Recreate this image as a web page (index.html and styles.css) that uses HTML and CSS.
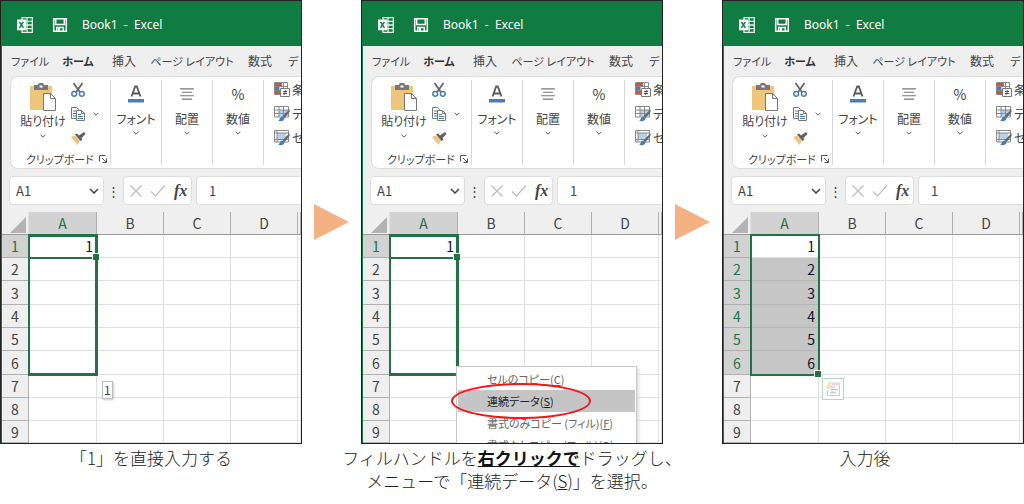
FILE: index.html
```html
<!DOCTYPE html>
<html lang="ja">
<head>
<meta charset="utf-8">
<title>連続データの入力</title>
<link rel="stylesheet" href="styles.css">
</head>
<body>
<svg class="defs" aria-hidden="true">
  <symbol id="excel" viewBox="0 0 16 16"><path d="M5 .7h10.3v14.6H5zM5 4.3h10M5 8h10M5 11.7h10M10 1v14" fill="none" stroke="#e4f3ea" stroke-width="1.3"/><path d="M0 2.5h9v10.8H0z" fill="#fff"/><path d="M2.4 4.8l4 6M6.4 4.8l-4 6" stroke="#107c41" stroke-width="1.5"/></symbol>
  <symbol id="save" viewBox="0 0 16 16"><path d="M1.700 1.700h12.600v12.600H1.700zM3.700 2v5.500h8.600V2M4.700 14v-3.500h6.600V14" fill="none" stroke="#fff" stroke-width="1.500"/><path d="M6 11h2v3H6z" fill="#fff"/></symbol>
  <symbol id="paste" viewBox="0 0 28 28"><path d="M1 3h22v24H1z" fill="#edc67c"/><path d="M5 2h4c0-3 6-3 6 0h4v5H5z" fill="#787878"/><path d="M10.5 2.5h3v2h-3z" fill="#fff"/><path d="M14.5 10.5h7l5 5v12h-12z" fill="#fff" stroke="#777"/><path d="M21.5 10.5v5h5" fill="none" stroke="#777"/></symbol>
  <symbol id="cut" viewBox="0 0 16 16"><path d="M3.5 1l6.3 9M12.5 1L6.2 10" stroke="#666" stroke-width="1.8"/><circle cx="4.2" cy="11.8" r="2.4" fill="none" stroke="#4780b8" stroke-width="1.5"/><circle cx="11.8" cy="11.8" r="2.4" fill="none" stroke="#4780b8" stroke-width="1.5"/></symbol>
  <symbol id="copy" viewBox="0 0 16 16"><path d="M1.5 1.5h5l2 2v9h-7z" fill="#fff" stroke="#777"/><path d="M3 5h4M3 7.500h4M3 10h4" stroke="#4780b8"/><path d="M6.500 4.500h5l3 3v7h-8z" fill="#fff" stroke="#777"/><path d="M11.500 4.500v3h3" fill="none" stroke="#777"/><path d="M8 8.500h3M8 10.500h5M8 12.500h5" stroke="#4780b8"/></symbol>
  <symbol id="brush" viewBox="0 0 16 16"><path d="M1 7l4-1.500 5 5L7.500 15z" fill="#edc67c"/><path d="M5 4.500l2-1 2 2L14 2l1.500 2-4 4 1 1.500L10.500 11z" fill="#606060"/></symbol>
  <symbol id="font" viewBox="0 0 16 18"><path d="M3.500 11.500L7.200 1.500h1.600l3.700 10M5 8.500h6" fill="none" stroke="#595959" stroke-width="1.8"/><path d="M0 14h16v3.500H0z" fill="#4a7db5"/></symbol>
  <symbol id="align" viewBox="0 0 14 12"><path d="M1 1.500h12M2.500 4.500h9M1 7.500h12M2.500 10.500h9" stroke="#777"/></symbol>
  <symbol id="cond" viewBox="0 0 16 16"><path d="M.5.500h13v12H.5zM.5 4.500h13M.5 8.500h13M5 .5v12M9.500.5v12" fill="#fff" stroke="#888"/><path d="M1 1h7v3H1zM1 9h5v3H1z" fill="#d35436"/><path d="M1 5h4v3H1z" fill="#4a7db5"/><path d="M6.500 6.500h9v8h-9z" fill="#fff" stroke="#777"/><path d="M9 9.500h4M9 11.500h4M12 8l-2 5" stroke="#555"/></symbol>
  <symbol id="tbl" viewBox="0 0 16 16"><path d="M.5.500h14v10.500H.5z" fill="#fff" stroke="#888"/><path d="M5 4h9v7H5z" fill="#b9d1e8"/><path d="M.5 4h14M.5 7.500h14M5 .5v10.500M9.500.5v10.500" stroke="#888"/><path d="M15.500 3v3l-5 6-2-1.500z" fill="#666"/><path d="M4 14.500c2 0 1.500-4 4.500-4l2 1.500c0 3-3.500 4-6.500 2.500z" fill="#3f7fbf"/></symbol>
  <symbol id="cell" viewBox="0 0 16 16"><path d="M.5.500h14v11.500H.5z" fill="#fff" stroke="#888"/><path d="M3 3h9v6.500H3z" fill="#b9d1e8"/><path d="M.5 3h14M.5 9.500h14M3 .5v11.500" fill="none" stroke="#888"/><path d="M15.500 3v3l-5 6-2-1.500z" fill="#666"/><path d="M4 14.500c2 0 1.500-4 4.500-4l2 1.500c0 3-3.500 4-6.500 2.500z" fill="#3f7fbf"/></symbol>
  <symbol id="chev" viewBox="0 0 10 6"><path d="M1 1l4 4 4-4" fill="none" stroke="currentColor" stroke-width="1.500"/></symbol>
  <symbol id="launch" viewBox="0 0 8 8"><path d="M.5 6.500v-6h6M3 3l4 4M7.500 3.500v4h-4" fill="none" stroke="#555"/></symbol>
  <symbol id="x" viewBox="0 0 14 14"><path d="M1.500 1.500l11 11M12.500 1.500l-11 11" stroke="#bbb" stroke-width="1.200"/></symbol>
  <symbol id="check" viewBox="0 0 16 14"><path d="M1 7.500l4.500 4.500L15 1.500" fill="none" stroke="#bbb" stroke-width="1.200"/></symbol>
  <symbol id="corner" viewBox="0 0 16 16"><path d="M16 0v16H0z" fill="#b3b3b3"/></symbol>
  <symbol id="flash" viewBox="0 0 16 16"><path d="M4 1h3L5 5h2L1 11l2-4H1z" fill="#f8ddb8"/><path d="M7 1.500h8v3H7z" fill="#ddd"/><path d="M14.500 4v10.500h-12V10" fill="none" stroke="#ccc"/><path d="M6 6h4" stroke="#eba9a0"/><path d="M6 8.500h7" stroke="#9fc4e6" stroke-width="1.300"/><path d="M5 11.500h6" stroke="#b9dcc8" stroke-width="2"/></symbol>
  <symbol id="arrow" viewBox="0 0 35 36"><path d="M0 0l35 18L0 36z" fill="#f4b183"/></symbol>
</svg>

<main class="steps">
  <figure class="step">
    <div class="window">
      <header class="titlebar"><svg class="i16"><use href="#excel"/></svg><button class="save" aria-label="保存"><svg class="i16"><use href="#save"/></svg></button><span class="name">Book1  -  Excel</span></header>
      <nav class="tabs"><button class="w-file">ファイル</button><button class="w-home on">ホーム</button><button class="w-short">挿入</button><button class="w-page">ページ レイアウト</button><button class="w-short">数式</button><button class="w-cut">デ</button></nav>
      <div class="ribbon">
        <section class="group clip">
          <div class="cliptop">
            <button class="big"><svg class="i28"><use href="#paste"/></svg><span>貼り付け</span><svg class="chev"><use href="#chev"/></svg></button>
            <div class="small"><button aria-label="切り取り"><svg class="i16"><use href="#cut"/></svg></button><button aria-label="コピー"><svg class="i16"><use href="#copy"/></svg><svg class="chev"><use href="#chev"/></svg></button><button aria-label="書式のコピー"><svg class="i16"><use href="#brush"/></svg></button></div>
          </div>
          <div class="clipfoot"><span>クリップボード</span><button aria-label="詳細"><svg class="i8"><use href="#launch"/></svg></button></div>
        </section>
        <button class="group one"><svg class="ico"><use href="#font"/></svg><span>フォント</span><svg class="chev"><use href="#chev"/></svg></button>
        <button class="group one"><svg class="ico thin"><use href="#align"/></svg><span>配置</span><svg class="chev"><use href="#chev"/></svg></button>
        <button class="group one"><span class="ico pct">%</span><span>数値</span><svg class="chev"><use href="#chev"/></svg></button>
        <section class="styles"><button><svg class="i16"><use href="#cond"/></svg>条</button><button><svg class="i16"><use href="#tbl"/></svg>デ</button><button><svg class="i16"><use href="#cell"/></svg>セ</button></section>
      </div>
      <div class="formulabar"><div class="box namebox"><input aria-label="名前ボックス" value="A1"><button aria-label="一覧"><svg class="chev wide"><use href="#chev"/></svg></button></div><span class="dots">⋮</span><div class="box tools"><button aria-label="キャンセル"><svg class="i14"><use href="#x"/></svg></button><button aria-label="入力"><svg class="i16"><use href="#check"/></svg></button><button class="fx">fx</button></div><input class="box formula" aria-label="数式バー" value="1"></div>
      <div class="sheet">
        <table>
          <colgroup><col class="c-row"><col class="c-a"><col class="c"><col class="c"><col class="c"><col></colgroup>
          <thead><tr><td class="corner"><svg class="i16"><use href="#corner"/></svg></td><th class="sel">A</th><th>B</th><th>C</th><th>D</th><th></th></tr></thead>
          <tbody>
            <tr><th class="sel">1</th><td>1</td><td></td><td></td><td></td><td></td></tr>
            <tr><th>2</th><td></td><td></td><td></td><td></td><td></td></tr>
            <tr><th>3</th><td></td><td></td><td></td><td></td><td></td></tr>
            <tr><th>4</th><td></td><td></td><td></td><td></td><td></td></tr>
            <tr><th>5</th><td></td><td></td><td></td><td></td><td></td></tr>
            <tr><th>6</th><td></td><td></td><td></td><td></td><td></td></tr>
            <tr><th>7</th><td></td><td></td><td></td><td></td><td></td></tr>
            <tr><th>8</th><td></td><td></td><td></td><td></td><td></td></tr>
            <tr><th>9</th><td></td><td></td><td></td><td></td><td></td></tr>
          </tbody>
        </table>
        <div class="range drag"></div><div class="active"></div><div class="tip">1</div>
      </div>
    </div>
    <figcaption>「1」を直接入力する</figcaption>
  </figure>

  <svg class="arrow" aria-hidden="true"><use href="#arrow"/></svg>

  <figure class="step">
    <div class="window">
      <header class="titlebar"><svg class="i16"><use href="#excel"/></svg><button class="save" aria-label="保存"><svg class="i16"><use href="#save"/></svg></button><span class="name">Book1  -  Excel</span></header>
      <nav class="tabs"><button class="w-file">ファイル</button><button class="w-home on">ホーム</button><button class="w-short">挿入</button><button class="w-page">ページ レイアウト</button><button class="w-short">数式</button><button class="w-cut">デ</button></nav>
      <div class="ribbon">
        <section class="group clip">
          <div class="cliptop">
            <button class="big"><svg class="i28"><use href="#paste"/></svg><span>貼り付け</span><svg class="chev"><use href="#chev"/></svg></button>
            <div class="small"><button aria-label="切り取り"><svg class="i16"><use href="#cut"/></svg></button><button aria-label="コピー"><svg class="i16"><use href="#copy"/></svg><svg class="chev"><use href="#chev"/></svg></button><button aria-label="書式のコピー"><svg class="i16"><use href="#brush"/></svg></button></div>
          </div>
          <div class="clipfoot"><span>クリップボード</span><button aria-label="詳細"><svg class="i8"><use href="#launch"/></svg></button></div>
        </section>
        <button class="group one"><svg class="ico"><use href="#font"/></svg><span>フォント</span><svg class="chev"><use href="#chev"/></svg></button>
        <button class="group one"><svg class="ico thin"><use href="#align"/></svg><span>配置</span><svg class="chev"><use href="#chev"/></svg></button>
        <button class="group one"><span class="ico pct">%</span><span>数値</span><svg class="chev"><use href="#chev"/></svg></button>
        <section class="styles"><button><svg class="i16"><use href="#cond"/></svg>条</button><button><svg class="i16"><use href="#tbl"/></svg>デ</button><button><svg class="i16"><use href="#cell"/></svg>セ</button></section>
      </div>
      <div class="formulabar"><div class="box namebox"><input aria-label="名前ボックス" value="A1"><button aria-label="一覧"><svg class="chev wide"><use href="#chev"/></svg></button></div><span class="dots">⋮</span><div class="box tools"><button aria-label="キャンセル"><svg class="i14"><use href="#x"/></svg></button><button aria-label="入力"><svg class="i16"><use href="#check"/></svg></button><button class="fx">fx</button></div><input class="box formula" aria-label="数式バー" value="1"></div>
      <div class="sheet">
        <table>
          <colgroup><col class="c-row"><col class="c-a"><col class="c"><col class="c"><col class="c"><col></colgroup>
          <thead><tr><td class="corner"><svg class="i16"><use href="#corner"/></svg></td><th class="sel">A</th><th>B</th><th>C</th><th>D</th><th></th></tr></thead>
          <tbody>
            <tr><th class="sel">1</th><td>1</td><td></td><td></td><td></td><td></td></tr>
            <tr><th>2</th><td></td><td></td><td></td><td></td><td></td></tr>
            <tr><th>3</th><td></td><td></td><td></td><td></td><td></td></tr>
            <tr><th>4</th><td></td><td></td><td></td><td></td><td></td></tr>
            <tr><th>5</th><td></td><td></td><td></td><td></td><td></td></tr>
            <tr><th>6</th><td></td><td></td><td></td><td></td><td></td></tr>
            <tr><th>7</th><td></td><td></td><td></td><td></td><td></td></tr>
            <tr><th>8</th><td></td><td></td><td></td><td></td><td></td></tr>
            <tr><th>9</th><td></td><td></td><td></td><td></td><td></td></tr>
          </tbody>
        </table>
        <div class="range drag"></div><div class="active"></div>
        <div class="menu"><button>セルのコピー(<u>C</u>)</button><button class="hover">連続データ(<u>S</u>)</button><button>書式のみコピー (フィル)(<u>F</u>)</button><button>書式なしコピー (フィル)(<u>O</u>)</button></div>
        <div class="ring"></div>
      </div>
    </div>
    <figcaption>フィルハンドルを<b>右クリックで</b>ドラッグし、<br>メニューで「連続データ(<u>S</u>)」を選択。</figcaption>
  </figure>

  <svg class="arrow" aria-hidden="true"><use href="#arrow"/></svg>

  <figure class="step">
    <div class="window">
      <header class="titlebar"><svg class="i16"><use href="#excel"/></svg><button class="save" aria-label="保存"><svg class="i16"><use href="#save"/></svg></button><span class="name">Book1  -  Excel</span></header>
      <nav class="tabs"><button class="w-file">ファイル</button><button class="w-home on">ホーム</button><button class="w-short">挿入</button><button class="w-page">ページ レイアウト</button><button class="w-short">数式</button><button class="w-cut">デ</button></nav>
      <div class="ribbon">
        <section class="group clip">
          <div class="cliptop">
            <button class="big"><svg class="i28"><use href="#paste"/></svg><span>貼り付け</span><svg class="chev"><use href="#chev"/></svg></button>
            <div class="small"><button aria-label="切り取り"><svg class="i16"><use href="#cut"/></svg></button><button aria-label="コピー"><svg class="i16"><use href="#copy"/></svg><svg class="chev"><use href="#chev"/></svg></button><button aria-label="書式のコピー"><svg class="i16"><use href="#brush"/></svg></button></div>
          </div>
          <div class="clipfoot"><span>クリップボード</span><button aria-label="詳細"><svg class="i8"><use href="#launch"/></svg></button></div>
        </section>
        <button class="group one"><svg class="ico"><use href="#font"/></svg><span>フォント</span><svg class="chev"><use href="#chev"/></svg></button>
        <button class="group one"><svg class="ico thin"><use href="#align"/></svg><span>配置</span><svg class="chev"><use href="#chev"/></svg></button>
        <button class="group one"><span class="ico pct">%</span><span>数値</span><svg class="chev"><use href="#chev"/></svg></button>
        <section class="styles"><button><svg class="i16"><use href="#cond"/></svg>条</button><button><svg class="i16"><use href="#tbl"/></svg>デ</button><button><svg class="i16"><use href="#cell"/></svg>セ</button></section>
      </div>
      <div class="formulabar"><div class="box namebox"><input aria-label="名前ボックス" value="A1"><button aria-label="一覧"><svg class="chev wide"><use href="#chev"/></svg></button></div><span class="dots">⋮</span><div class="box tools"><button aria-label="キャンセル"><svg class="i14"><use href="#x"/></svg></button><button aria-label="入力"><svg class="i16"><use href="#check"/></svg></button><button class="fx">fx</button></div><input class="box formula" aria-label="数式バー" value="1"></div>
      <div class="sheet">
        <table>
          <colgroup><col class="c-row"><col class="c-a"><col class="c"><col class="c"><col class="c"><col></colgroup>
          <thead><tr><td class="corner"><svg class="i16"><use href="#corner"/></svg></td><th class="sel">A</th><th>B</th><th>C</th><th>D</th><th></th></tr></thead>
          <tbody>
            <tr><th class="sel">1</th><td>1</td><td></td><td></td><td></td><td></td></tr>
            <tr><th class="sel">2</th><td class="fill">2</td><td></td><td></td><td></td><td></td></tr>
            <tr><th class="sel">3</th><td class="fill">3</td><td></td><td></td><td></td><td></td></tr>
            <tr><th class="sel">4</th><td class="fill">4</td><td></td><td></td><td></td><td></td></tr>
            <tr><th class="sel">5</th><td class="fill">5</td><td></td><td></td><td></td><td></td></tr>
            <tr><th class="sel">6</th><td class="fill">6</td><td></td><td></td><td></td><td></td></tr>
            <tr><th>7</th><td></td><td></td><td></td><td></td><td></td></tr>
            <tr><th>8</th><td></td><td></td><td></td><td></td><td></td></tr>
            <tr><th>9</th><td></td><td></td><td></td><td></td><td></td></tr>
          </tbody>
        </table>
        <div class="range done"></div>
        <button class="autofill" aria-label="オートフィル オプション"><svg class="i16"><use href="#flash"/></svg></button>
      </div>
    </div>
    <figcaption class="after">入力後</figcaption>
  </figure>
</main>
</body>
</html>
```
FILE: styles.css
```css
* { box-sizing: border-box; }
body {
  margin: 0;
  background: #fff;
  color: #444;
  font: 12px/16px "Noto Sans CJK JP", sans-serif;
  font-feature-settings: "palt";
}
button, input {
  margin: 0;
  padding: 0;
  border: 0;
  background: none;
  color: inherit;
  font: inherit;
  font-feature-settings: inherit;
  white-space: nowrap;
}
svg { display: block; flex: none; }
.defs { position: absolute; width: 0; height: 0; }
.i8 { width: 8px; height: 8px; }
.i14 { width: 14px; height: 14px; }
.i16 { width: 16px; height: 16px; }
.i28 { width: 28px; height: 28px; }
.chev { width: 6px; height: 4px; }
.chev.wide { width: 10px; height: 6px; }

.steps {
  display: grid;
  grid-template-columns: minmax(0, 1fr) 59px minmax(0, 1fr) 59px minmax(0, 1fr);
}
.step { margin: 0; }
.arrow { width: 35px; height: 36px; margin: 204px auto 0 12px; }
.window {
  overflow: hidden;
  padding-left: 1px;
  border: 1px solid #222;
  background: #efefef;
  box-shadow: inset 1px 0 #107c41;
}

.titlebar {
  display: flex;
  align-items: center;
  height: 45px;
  padding: 2px 0 0 15px;
  background: #107c41;
  color: #fff;
}
.save { margin: 0 14px 0 19px; }
.name { font-family: "Noto Sans", sans-serif; white-space: pre; }

.tabs {
  display: flex;
  height: 30px;
  padding-left: 5px;
  font-size: 11px;
}
.tabs button { flex: none; }
.w-file { width: 46px; }
.w-home { width: 50px; }
.w-short { width: 42px; font-size: 12px; }
.w-page { width: 94px; }
.w-cut { padding-left: 7px; }
.tabs .on { color: #333; font-weight: 700; }

.ribbon {
  display: flex;
  height: 93px;
  margin-left: 8px;
  padding: 3px 0;
  border: 1px solid #ddd;
  border-right: 0;
  border-radius: 8px 0 0 8px;
  background: #fff;
}
.group { flex: none; border-right: 1px solid #d8d8d8; }
.clip { display: flex; flex-direction: column; justify-content: space-between; width: 100px; }
.cliptop { display: flex; }
.big { display: flex; flex-direction: column; align-items: center; width: 64px; padding-top: 3px; }
.big span { line-height: 20px; }
.big .chev { margin-top: 3px; }
.small { display: flex; flex-direction: column; gap: 8px; padding-top: 2px; margin-left: -5px; }
.small button { display: flex; align-items: center; gap: 7px; }
.clipfoot {
  display: flex;
  align-items: center;
  justify-content: space-between;
  padding: 0 3px 0 15px;
  font-size: 11px;
  line-height: 12px;
}
.one { display: flex; flex-direction: column; align-items: center; width: 51px; padding-top: 5px; }
.one .ico { width: 16px; height: 18px; margin-bottom: 8px; }
.one .thin { padding: 2px 0; }
.pct { font-size: 14px; line-height: 18px; }
.one .chev { margin-top: 4px; }
.styles { display: flex; flex-direction: column; gap: 8px; padding: 2px 0 0 10px; }
.styles button { display: flex; gap: 2px; height: 16px; }

.formulabar {
  display: flex;
  align-items: center;
  height: 43px;
  padding-left: 7px;
  font-size: 13px;
}
.box { height: 29px; border: 1px solid #ddd; border-radius: 4px; background: #fff; }
.namebox { display: flex; align-items: center; width: 95px; padding: 0 4px 0 6px; }
.namebox input { flex: 1; min-width: 0; }
.dots { width: 19px; text-align: center; }
.tools { display: flex; align-items: center; gap: 7px; width: 69px; padding: 0 4px 0 5px; }
.fx { margin-left: 1px; font: italic 700 16px/20px "Liberation Serif", serif; }
.formula { flex: 1; min-width: 0; margin-left: 4px; padding-left: 12px; border-right: 0; border-radius: 4px 0 0 4px; }

.sheet { position: relative; overflow: hidden; background: #fff; font-size: 14px; }
table { width: 100%; table-layout: fixed; border-collapse: separate; border-spacing: 0; line-height: 16px; }
.c-row { width: 27px; }
.c-a { width: 68px; }
.c { width: 67px; }
tr { height: 23px; }
tbody tr:nth-child(3n) { height: 24px; }
tbody tr:last-child { height: 22px; }
th, td { padding: 0; border: solid #e0e0e0; border-width: 0 1px 1px 0; }
th { border-color: #b0b0b0; background: #efefef; font-weight: 400; }
tbody td { padding-right: 3px; color: #112; text-align: right; }
thead td, thead th { border-bottom-color: #999; }
.corner { background: #efefef; }
.corner svg { margin: 4px 0 0 8px; }
.sel { background: #d2d2d2; color: #217346; }
.fill { background: #c6c6c6; border-bottom-color: #b5b5b5; }

.range { position: absolute; top: 22px; left: 26px; width: 70px; height: 142px; border: 2px solid #217346; }
.drag { border-width: 3px 3px 3px 2px; }
.active { position: absolute; top: 22px; left: 26px; width: 70px; height: 25px; border: 2px solid #217346; }
.active::after, .done::after {
  content: "";
  position: absolute;
  right: -3px;
  bottom: -3px;
  width: 6px;
  height: 6px;
  border: solid #fff;
  border-width: 1px 0 0 1px;
  background: #217346;
}
.tip {
  position: absolute;
  top: 169px;
  left: 100px;
  padding: 0 1px;
  border: 1px solid #bbb;
  background: #fff;
  box-shadow: 1px 1px 2px #ccc;
  font-size: 12px;
}
.autofill {
  position: absolute;
  top: 166px;
  left: 98px;
  padding: 2px;
  border: 1px solid #b9d5c6;
  background: #fff;
}
.menu {
  position: absolute;
  top: 154px;
  left: 93px;
  display: grid;
  width: 181px;
  padding: 1px;
  border: 1px solid #c8c8c8;
  background: #fff;
  box-shadow: 2px 2px 3px #ddd;
  font-size: 11px;
}
.menu button { height: 22px; padding-left: 29px; color: #666; text-align: left; }
.menu .hover { background: #c5c5c5; color: #222; }
.ring {
  position: absolute;
  top: 171px;
  left: 88px;
  width: 140px;
  height: 36px;
  border: 2px solid #f01818;
  border-radius: 50%;
}

figcaption {
  display: flow-root;
  margin: 2px -30px 0;
  color: #222;
  font-size: 17px;
  font-weight: 300;
  font-feature-settings: normal;
  line-height: 23px;
  text-align: center;
  white-space: nowrap;
}
figcaption b { color: #111; font-weight: 700; text-decoration: underline; }
.after { margin: 2px 0 0; padding-right: 16px; }
```
